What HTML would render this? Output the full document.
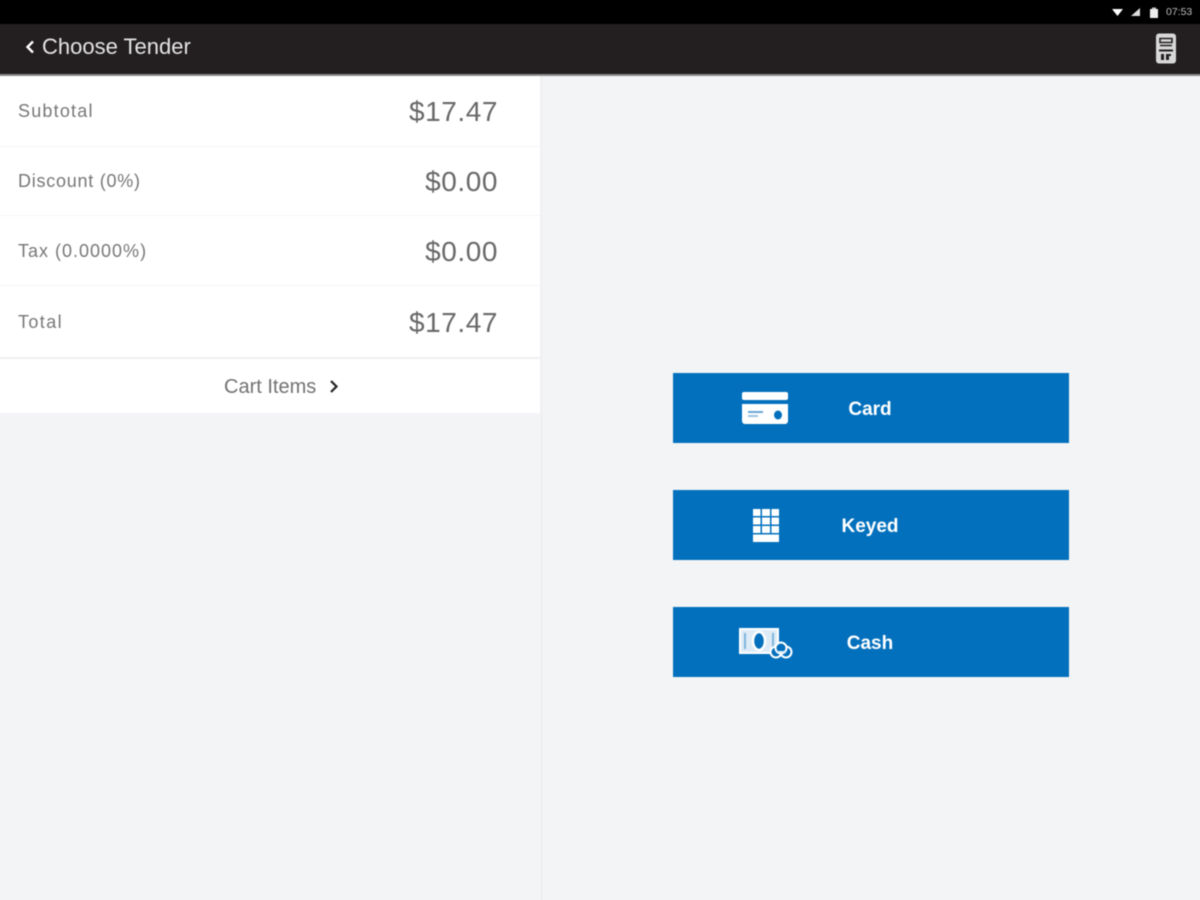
<!DOCTYPE html>
<html>
<head>
<meta charset="utf-8">
<style>
html,body{margin:0;padding:0;width:1200px;height:900px;overflow:hidden;background:#f3f4f6;font-family:"Liberation Sans",sans-serif}
#w{position:absolute;left:0;top:0;width:1200px;height:900px;overflow:hidden}
#p{position:absolute;left:0;top:0;width:1200px;height:900px;filter:blur(0.45px)}
.a{position:absolute;white-space:nowrap}
svg{position:absolute}
.lbl{color:#777;font-size:18px;left:18px;line-height:24px}
.val{color:#686868;font-size:28px;line-height:34px;right:702px;letter-spacing:0.55px}
.btn{position:absolute;left:673px;width:396px;height:70px;background:#0270bd;color:#fff;font-size:19px;font-weight:bold;text-align:center;line-height:73px;text-indent:-2px}
.sep{position:absolute;left:-5px;width:545px;height:1px;background:#f5f5f5}
</style>
</head>
<body>
<div id="w">
<div id="p">
<div class="a" style="left:-5px;top:-5px;width:1210px;height:29px;background:#000"></div>
<div class="a" style="left:-5px;top:24px;width:1210px;height:50px;background:#231f20"></div>
<div class="a" style="left:-5px;top:74px;width:1210px;height:2px;background:#8a8a8a"></div>

<svg style="left:1108px;top:5px" width="60" height="14" viewBox="0 0 60 14">
<path d="M4 4h11l-5.500 7z" fill="#fff"/>
<path d="M23 11l9-8v8z" fill="#ddd"/>
<rect x="42" y="4" width="8" height="9" fill="#eee"/><rect x="44" y="2.500" width="4" height="2" fill="#ccc"/>
</svg>
<div class="a" style="left:1166px;top:6px;font-size:10.500px;line-height:13px;color:#bdbdbd">07:53</div>

<svg style="left:24px;top:39px" width="12" height="16" viewBox="0 0 12 16"><path d="M9 2.500L3.500 8 9 13.500" fill="none" stroke="#fff" stroke-width="2.400"/></svg>
<div class="a" style="left:42px;top:33px;font-size:22px;line-height:28px;color:#e4e4e4">Choose Tender</div>

<svg style="left:1154px;top:32px" width="24" height="34" viewBox="0 0 24 34">
<rect x="2" y="1.500" width="20" height="30" rx="3" fill="#d8d8d8"/>
<path d="M6 6.500h12v4H6zM6 13.500h12" fill="none" stroke="#231f20" stroke-width="1.600"/>
<path d="M5 18.500h14" stroke="#231f20" stroke-width="2"/>
<path d="M7 22h3v6H7zM12 22h5v2h-2v4h-3z" fill="#231f20"/>
</svg>

<div class="a" style="left:-5px;top:76px;width:545px;height:337px;background:#fff"></div>
<div class="a" style="left:541px;top:76px;width:1px;height:830px;background:#eceded"></div>
<div class="sep" style="top:146px"></div>
<div class="sep" style="top:215px"></div>
<div class="sep" style="top:285px"></div>
<div class="sep" style="top:357px;height:2px;background:#eeeeee"></div>

<div class="a lbl" style="top:99px;letter-spacing:1.2px">Subtotal</div>
<div class="a val" style="top:95px">$17.47</div>
<div class="a lbl" style="top:169px;letter-spacing:0.75px">Discount (0%)</div>
<div class="a val" style="top:165px">$0.00</div>
<div class="a lbl" style="top:239px;letter-spacing:1px">Tax (0.0000%)</div>
<div class="a val" style="top:235px">$0.00</div>
<div class="a lbl" style="top:310px;letter-spacing:1.400px">Total</div>
<div class="a val" style="top:306px">$17.47</div>

<div class="a" style="left:224px;top:375px;font-size:20px;line-height:24px;color:#727272">Cart Items</div>
<svg style="left:328px;top:379px" width="13" height="15" viewBox="0 0 13 15"><path d="M3 2l5.500 5.500L3 13" fill="none" stroke="#222" stroke-width="2.200"/></svg>

<div class="btn" style="top:373px">Card</div>
<svg style="left:741px;top:391px" width="48" height="35" viewBox="0 0 48 35">
<rect x="1" y="1" width="46" height="8" rx="2" fill="#fff"/>
<path d="M1 13h46v17a3 3 0 0 1-3 3H4a3 3 0 0 1-3-3z" fill="#fff"/>
<rect x="7" y="20" width="15" height="2" fill="#6aa6d4"/>
<rect x="7" y="24" width="10" height="2" fill="#9cc4e2"/>
<ellipse cx="37" cy="24" rx="4" ry="4.500" fill="#0270bd"/>
</svg>

<div class="btn" style="top:490px">Keyed</div>
<svg style="left:752px;top:508px" width="28" height="35" viewBox="0 0 28 35" fill="#fff">
<rect x="1" y="1" width="7.500" height="7"/><rect x="10" y="1" width="8" height="7"/><rect x="19.500" y="1" width="7.500" height="7"/>
<rect x="1" y="9.500" width="7.500" height="7"/><rect x="10" y="9.500" width="8" height="7"/><rect x="19.500" y="9.500" width="7.500" height="7"/>
<rect x="1" y="18" width="7.500" height="7"/><rect x="10" y="18" width="8" height="7"/><rect x="19.500" y="18" width="7.500" height="7"/>
<rect x="1" y="26.500" width="26" height="7.500"/>
</svg>

<div class="btn" style="top:607px">Cash</div>
<svg style="left:738px;top:627px" width="56" height="34" viewBox="0 0 56 34">
<rect x="2" y="2" width="38" height="24" fill="#dcebf6" stroke="#fff" stroke-width="2"/>
<ellipse cx="21" cy="14" rx="6" ry="9" fill="#0270bd" stroke="#fff" stroke-width="2.500"/>
<path d="M7 6v16M35 6v16" stroke="#7fb5dc" stroke-width="2"/>
<circle cx="38" cy="25" r="5.500" fill="#0270bd" stroke="#fff" stroke-width="2"/>
<circle cx="48" cy="25" r="5.500" fill="#0270bd" stroke="#fff" stroke-width="2"/>
<circle cx="43" cy="21" r="5.500" fill="#0270bd" stroke="#fff" stroke-width="2"/>
<path d="M38 25h10" stroke="#dcebf6" stroke-width="2"/>
</svg>
</div>
</div>
</body>
</html>
